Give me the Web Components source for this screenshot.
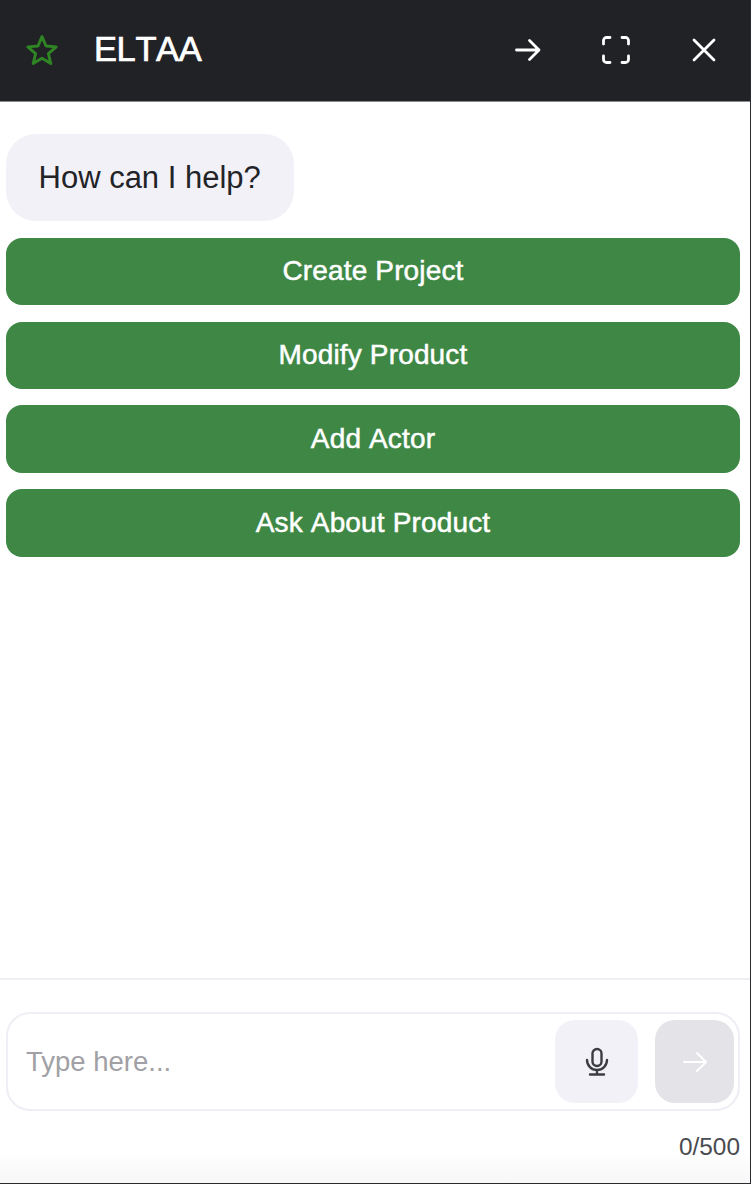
<!DOCTYPE html>
<html>
<head>
<meta charset="utf-8">
<style>
  html, body { margin: 0; padding: 0; background: #fff; }
  body { font-family: "Liberation Sans", Arial, sans-serif; }
</style>
</head>
<body>
<chat-window>
  <chat-header slot="header" title-text="ELTAA"></chat-header>
  <chat-bubble>How can I help?</chat-bubble>
  <action-button>Create Project</action-button>
  <action-button>Modify Product</action-button>
  <action-button>Add Actor</action-button>
  <action-button>Ask About Product</action-button>
  <chat-input slot="footer" placeholder="Type here..." count="0/500"></chat-input>
</chat-window>

<script>
class ChatWindow extends HTMLElement {
  constructor() {
    super();
    this.attachShadow({ mode: 'open' });
    this.shadowRoot.innerHTML = `
      <style>
        :host {
          display: flex;
          flex-direction: column;
          box-sizing: border-box;
          width: 751px;
          height: 1184px;
          background: #fff;
          border-right: 1px solid #2a2b2e;
          border-bottom: 1px solid #2a2b2e;
        }
        .messages {
          flex: 1;
          display: flex;
          flex-direction: column;
          align-items: flex-start;
          gap: 16.7px;
          padding: 32px 10px 0 6px;
        }
      </style>
      <slot name="header"></slot>
      <div class="messages"><slot></slot></div>
      <slot name="footer"></slot>
    `;
  }
}

class ChatHeader extends HTMLElement {
  constructor() {
    super();
    this.attachShadow({ mode: 'open' });
    this.shadowRoot.innerHTML = `
      <style>
        :host {
          display: flex;
          align-items: center;
          box-sizing: border-box;
          height: 102px;
          padding: 0 32px 2px 25px;
          background: #212226;
          border-bottom: 1px solid #8a8b8e;
          color: #fff;
        }
        .star { width: 34px; height: 34px; display: block; }
        h1 {
          flex: 1;
          margin: 0 0 0 35px;
          font-size: 34.5px;
          font-weight: 400;
          font-kerning: none;
          -webkit-text-stroke: 0.7px #fff;
          letter-spacing: -0.4px;
        }
        .actions { display: flex; align-items: center; gap: 60px; }
        svg.icon {
          width: 28px;
          height: 28px;
          display: block;
          fill: none;
          stroke: #fff;
          stroke-width: 2.8;
          stroke-linecap: round;
          stroke-linejoin: round;
        }
      </style>
      <svg class="star" viewBox="0 0 34 34" fill="none" stroke="#2f8423" stroke-width="2.9" stroke-linejoin="round">
        <path d="M17 3.5 L21 13 L31.2 13.9 L23.4 20.6 L25.8 30.6 L17 25.3 L8.2 30.6 L10.6 20.6 L2.8 13.9 L13 13 Z"/>
      </svg>
      <h1>${this.getAttribute('title-text') || ''}</h1>
      <div class="actions">
        <svg class="icon" viewBox="0 0 28 28"><path d="M2.5 14 H25 M15.5 4.5 L25 14 L15.5 23.5"/></svg>
        <svg class="icon" viewBox="0 0 28 28"><path d="M1.5 8 V4.5 A3 3 0 0 1 4.5 1.5 H8 M20 1.5 H23.5 A3 3 0 0 1 26.5 4.5 V8 M26.5 20 V23.5 A3 3 0 0 1 23.5 26.5 H20 M8 26.5 H4.5 A3 3 0 0 1 1.5 23.5 V20"/></svg>
        <svg class="icon" viewBox="0 0 28 28"><path d="M4 4 L24 24 M24 4 L4 24"/></svg>
      </div>
    `;
  }
}

class ChatBubble extends HTMLElement {
  constructor() {
    super();
    this.attachShadow({ mode: 'open' });
    this.shadowRoot.innerHTML = `
      <style>
        :host {
          display: flex;
          align-items: center;
          box-sizing: border-box;
          height: 87px;
          padding: 0 33px 0 32.5px;
          background: #f2f1f8;
          border-radius: 30px;
          color: #222327;
          font-size: 31px;
        }
      </style>
      <slot></slot>
    `;
  }
}

class ActionButton extends HTMLElement {
  constructor() {
    super();
    this.attachShadow({ mode: 'open' });
    this.shadowRoot.innerHTML = `
      <style>
        :host {
          display: flex;
          align-items: center;
          justify-content: center;
          box-sizing: border-box;
          width: 100%;
          height: 67.2px;
          background: #3e8745;
          border-radius: 16px;
          color: #fff;
          font-size: 28px;
          font-kerning: none;
          letter-spacing: 0.15px;
          -webkit-text-stroke: 0.5px #fff;
        }
      </style>
      <slot></slot>
    `;
  }
}

class ChatInput extends HTMLElement {
  constructor() {
    super();
    this.attachShadow({ mode: 'open' });
    this.shadowRoot.innerHTML = `
      <style>
        :host {
          display: block;
          box-sizing: border-box;
          border-top: 2px solid #eeeef3;
          padding: 32px 10px 0 6px;
          height: 205px;
          background: linear-gradient(#fff 170px, #f7f7f7 205px);
        }
        .box {
          display: flex;
          align-items: center;
          box-sizing: border-box;
          height: 99px;
          padding: 0 4px 0 18px;
          border: 2px solid #eeeef5;
          border-radius: 24px;
          background: #fff;
        }
        .placeholder { flex: 1; color: #a0a0a5; font-size: 27.5px; }
        .btn {
          display: flex;
          align-items: center;
          justify-content: center;
          height: 83px;
          border-radius: 20px;
        }
        .mic { width: 83px; background: #f2f1f8; margin-right: 17px; }
        .send { width: 79px; background: #e4e3e8; }
        .btn svg { display: block; fill: none; stroke-linecap: round; stroke-linejoin: round; }
        .count {
          margin-top: 22px;
          text-align: right;
          color: #4a4b50;
          font-size: 24.4px;
        }
      </style>
      <div class="box">
        <div class="placeholder">${this.getAttribute('placeholder') || ''}</div>
        <div class="btn mic">
          <svg width="28" height="30" viewBox="0 0 28 30" stroke="#3c3d42" stroke-width="2.4">
            <rect x="9.5" y="2" width="9" height="17" rx="4.5"/>
            <path d="M4 13 A10 10 0 0 0 24 13 M14 23 V27.5 M7 27.5 H21"/>
          </svg>
        </div>
        <div class="btn send">
          <svg width="26" height="26" viewBox="0 0 26 26" stroke="#fff" stroke-width="2">
            <path d="M2 13 H24 M15 4 L24 13 L15 22"/>
          </svg>
        </div>
      </div>
      <div class="count">${this.getAttribute('count') || ''}</div>
    `;
  }
}

customElements.define('chat-window', ChatWindow);
customElements.define('chat-header', ChatHeader);
customElements.define('chat-bubble', ChatBubble);
customElements.define('action-button', ActionButton);
customElements.define('chat-input', ChatInput);
</script>
</body>
</html>
